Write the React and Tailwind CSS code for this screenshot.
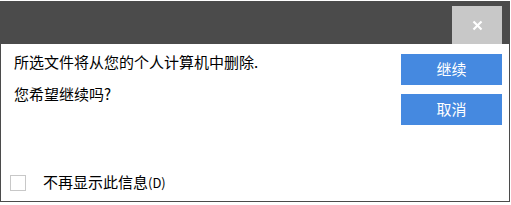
import React from 'react';
import { X } from 'lucide-react';

export default function App() {
  return (
    <div className="w-[511px] h-[205px] bg-white pt-px" style={{ fontFamily: '"Noto Sans CJK SC", "Liberation Sans", sans-serif' }}>
      <div className="w-[510px] h-[201px] flex flex-col">
        {/* Title bar */}
        <div className="h-[43px] bg-[#4b4b4b] flex items-end justify-end pr-[8px]">
          <button className="w-[50px] h-[38px] bg-[#c8c8c8] flex items-center justify-center text-white">
            <X size={13} strokeWidth={4} strokeLinecap="square" />
          </button>
        </div>

        {/* Body */}
        <div className="flex-1 flex flex-col border-l border-r border-b border-[#4b4b4b] bg-white">
          <div className="flex justify-between pl-[13px] pr-[7px]">
            <div className="pt-[8px] text-[15px] leading-[20px] text-black">
              <p>所选文件将从您的个人计算机中删除.</p>
              <p className="mt-3">您希望继续吗?</p>
            </div>
            <div className="pt-[10px] flex flex-col gap-[9px]">
              <button className="w-[101px] h-[31px] bg-[#4589e0] text-white text-[15px]">继续</button>
              <button className="w-[101px] h-[31px] bg-[#4589e0] text-white text-[15px]">取消</button>
            </div>
          </div>

          <div className="mt-auto flex items-center pl-[9px] pb-[8px]">
            <span className="w-[16px] h-[16px] border border-[#c8c8c8] bg-white" />
            <span className="ml-[17px] text-[15px] leading-[20px] text-black">
              不再显示此信息<span className="text-[13px]">(D)</span>
            </span>
          </div>
        </div>
      </div>
    </div>
  );
}
